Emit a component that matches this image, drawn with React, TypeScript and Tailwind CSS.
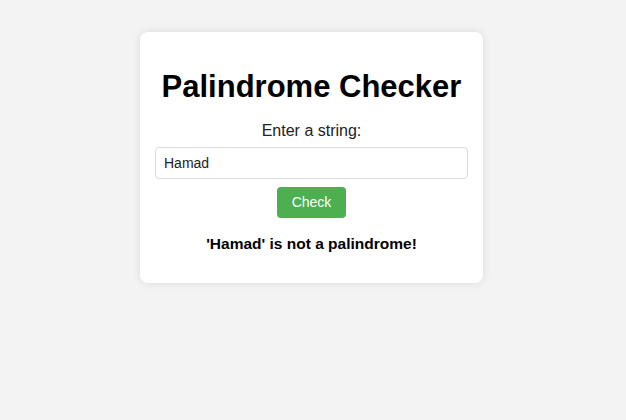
import { useState } from "react"

const isPalindrome = (s: string) => {
  const clean = s.toLowerCase().replace(/[^a-z0-9]/g, "")
  return clean === clean.split("").reverse().join("")
}

export default function App() {
  const [value, setValue] = useState("Hamad")
  const [result, setResult] = useState("'Hamad' is not a palindrome!")

  const check = () => {
    setResult(
      isPalindrome(value)
        ? `'${value}' is a palindrome!`
        : `'${value}' is not a palindrome!`
    )
  }

  return (
    <div className="flex min-h-[420px] justify-center bg-[#f3f3f3] pt-[32px] pr-[3px] font-['Liberation_Sans',Arial,sans-serif]">
      <div className="flex h-[251px] w-[343px] flex-col items-center rounded-[8px] bg-white px-[15px] pt-[37px] text-center shadow-[0_0_8px_rgba(0,0,0,0.1)]">
        <h1 className="text-[31px] leading-[35.6px] font-bold text-black">
          Palindrome Checker
        </h1>
        <label
          htmlFor="str"
          className="mt-[17px] text-[16px] leading-[18px] text-[#222]"
        >
          Enter a string:
        </label>
        <input
          id="str"
          value={value}
          onChange={(e) => setValue(e.target.value)}
          className="mt-[7px] h-[32px] w-full rounded-[4px] border border-[#dcdcdc] px-[8px] text-[14px] text-[#222] outline-none"
        />
        <button
          onClick={check}
          className="mt-[8px] h-[31px] w-[69px] rounded-[4px] bg-[#4caf50] text-[14px] text-white"
        >
          Check
        </button>
        <p className="mt-[17px] text-[15.5px] leading-[18px] font-bold text-black">
          {result}
        </p>
      </div>
    </div>
  )
}
